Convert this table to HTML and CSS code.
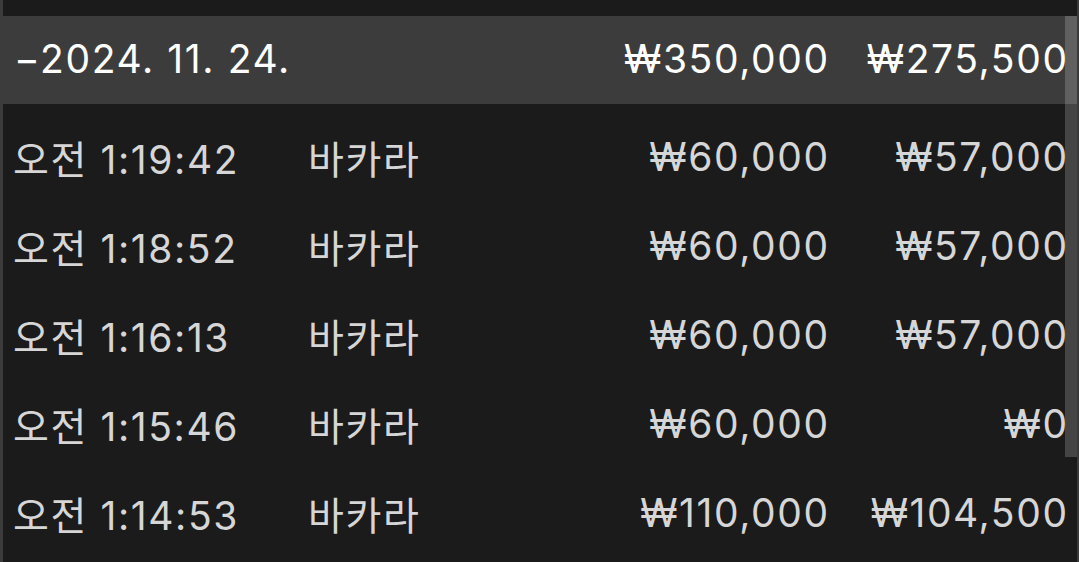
FILE: index.html
```html
<!DOCTYPE html>
<html lang="ko">
<head>
<meta charset="utf-8">
<link rel="stylesheet" href="styles.css">
</head>
<body>
<div class="frame">
  <div class="edge-left"></div>
  <div class="content">
    <div class="section-head">
      <div class="cell date">−2024. 11. 24.</div>
      <div class="cell amt">₩350,000</div>
      <div class="cell res">₩275,500</div>
    </div>
    <div class="rows">
      <div class="row">
        <div class="cell time">오전 1:19:42</div>
        <div class="cell game">바카라</div>
        <div class="cell amt">₩60,000</div>
        <div class="cell res">₩57,000</div>
      </div>
      <div class="row">
        <div class="cell time">오전 1:18:52</div>
        <div class="cell game">바카라</div>
        <div class="cell amt">₩60,000</div>
        <div class="cell res">₩57,000</div>
      </div>
      <div class="row">
        <div class="cell time">오전 1:16:13</div>
        <div class="cell game">바카라</div>
        <div class="cell amt">₩60,000</div>
        <div class="cell res">₩57,000</div>
      </div>
      <div class="row">
        <div class="cell time">오전 1:15:46</div>
        <div class="cell game">바카라</div>
        <div class="cell amt">₩60,000</div>
        <div class="cell res">₩0</div>
      </div>
      <div class="row">
        <div class="cell time">오전 1:14:53</div>
        <div class="cell game">바카라</div>
        <div class="cell amt">₩110,000</div>
        <div class="cell res">₩104,500</div>
      </div>
    </div>
    <div class="scroll-thumb"></div>
  </div>
  <div class="edge-right"></div>
</div>
</body>
</html>
```
FILE: styles.css
```css
html, body {
  margin: 0;
  padding: 0;
  background: #1b1b1b;
}
body {
  width: 1079px;
  height: 562px;
  overflow: hidden;
  font-family: "Inter", "Noto Sans CJK KR", sans-serif;
}
.frame {
  display: flex;
  height: 562px;
}
.edge-left {
  width: 3px;
  background: #3c3c3c;
}
.edge-right {
  width: 2px;
  background: #3a3a3a;
}
.content {
  flex: 1;
  position: relative;
  padding-top: 16px;
}
.section-head,
.row {
  display: grid;
  grid-template-columns: 295px 1fr auto 239px;
  align-items: center;
  padding: 0 10px 0 10px;
  font-size: 39px;
  letter-spacing: 1.6px;
}
.section-head {
  height: 88px;
  background: #3c3c3c;
  color: #ffffff;
}
.section-head .date {
  grid-column: 1 / 3;
  padding-left: 1px;
  padding-bottom: 3px;
}
.section-head .amt,
.section-head .res {
  padding-bottom: 3px;
}
.rows {
  padding-top: 8px;
}
.row {
  height: 89.1px;
  color: #d6d6d6;
}
.amt, .res {
  text-align: right;
  margin-right: -1.6px;
}
.game {
  font-family: "Noto Sans CJK KR", sans-serif;
}
.scroll-thumb {
  position: absolute;
  right: 0;
  top: 16px;
  width: 12px;
  height: 441px;
  background: rgba(255, 255, 255, 0.19);
}
```
